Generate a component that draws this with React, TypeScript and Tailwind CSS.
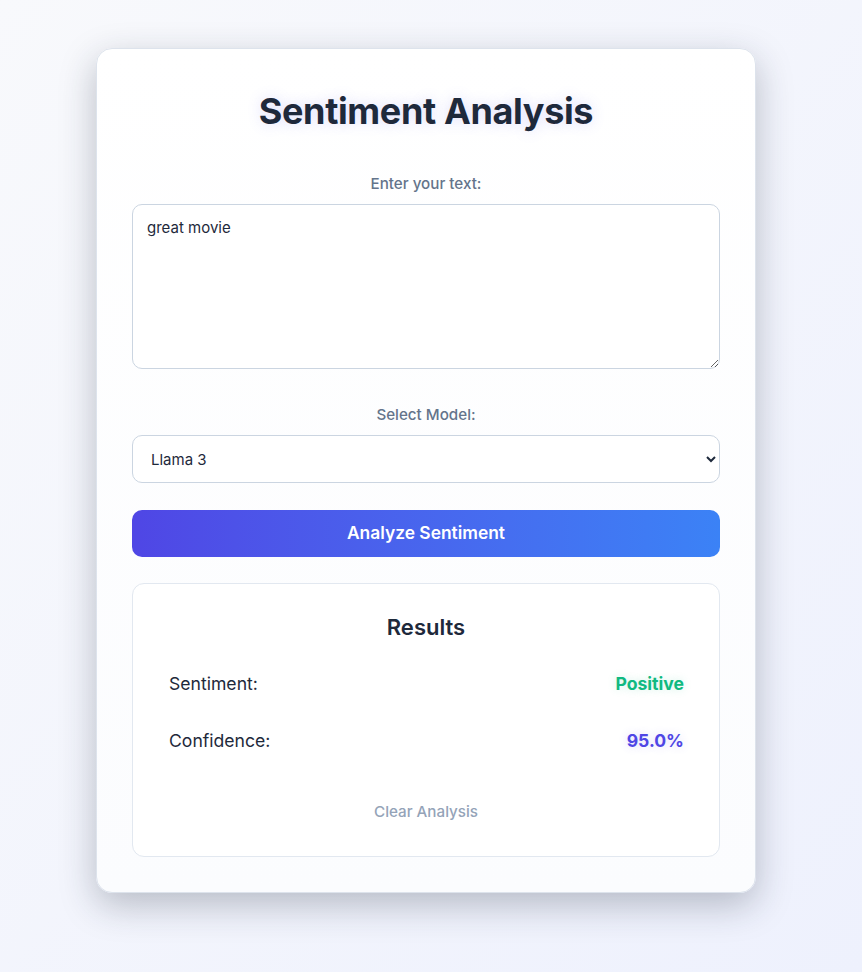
import { useState } from "react";

export default function App() {
  const [text, setText] = useState("great movie");
  const [model, setModel] = useState("llama3");

  return (
    <div className="min-h-screen bg-linear-to-br from-[#f8f9fc] to-[#eef1fd] font-['Inter',sans-serif]">
      <div className="flex justify-center pt-12 pb-20 pr-2.5">
        {/* Main Card */}
        <div className="w-[660px] rounded-2xl border border-[#dde3ec] bg-linear-to-b from-white to-[#fbfcfe] px-[35px] pt-[42px] pb-[35px] shadow-[0_12px_36px_rgba(30,41,59,0.28)]">
          <h1 className="text-center text-[36px] leading-10 font-bold tracking-[-0.01em] text-[#1e293b] [text-shadow:0_0_14px_rgba(99,102,241,0.22)]">
            Sentiment Analysis
          </h1>

          {/* Text Input */}
          <label className="mt-[42px] mb-[9px] block text-center text-[15.2px] leading-[22px] font-medium text-[#64748b]">
            Enter your text:
          </label>
          <textarea
            value={text}
            onChange={(e) => setText(e.target.value)}
            className="block h-[165px] w-full rounded-[10px] border border-[#cbd5e1] bg-white px-3.5 py-3 text-[15px] leading-[22px] text-[#1e293b] outline-none"
          />

          {/* Model Select */}
          <label className="mt-[35px] mb-[9px] block text-center text-[15.2px] leading-[22px] font-medium text-[#64748b]">
            Select Model:
          </label>
          <select
            value={model}
            onChange={(e) => setModel(e.target.value)}
            className="block h-12 w-full rounded-[10px] border border-[#cbd5e1] bg-white pr-3 pl-3.5 text-[15px] text-[#1e293b] outline-none"
          >
            <option value="llama3">Llama 3</option>
            <option value="gpt4">GPT-4</option>
            <option value="bert">BERT</option>
          </select>

          {/* Analyze Button */}
          <button className="mt-[27px] h-[47px] w-full rounded-[10px] bg-linear-to-r from-[#4f46e5] to-[#3b82f6] text-[17.4px] font-semibold text-white">
            Analyze Sentiment
          </button>

          {/* Results */}
          <div className="mt-[26px] rounded-xl border border-[#e2e8f0] bg-white px-7 pt-7 pb-[33px]">
            <h2 className="text-center text-[22px] leading-[30px] font-semibold text-[#1e293b]">
              Results
            </h2>
            <div className="mt-[13px] flex flex-col">
              <div className="flex items-center justify-between py-4 pr-[7px] pl-2 text-[17.6px] leading-[25px]">
                <span className="text-[#1e293b]">Sentiment:</span>
                <span className="font-bold text-[#10b981] [text-shadow:0_0_10px_rgba(16,185,129,0.2)]">
                  Positive
                </span>
              </div>
              <div className="flex items-center justify-between py-4 pr-[7px] pl-2 text-[17.6px] leading-[25px]">
                <span className="text-[#1e293b]">Confidence:</span>
                <span className="font-bold text-[#4f46e5] [text-shadow:0_0_10px_rgba(79,70,229,0.2)]">
                  95.0%
                </span>
              </div>
            </div>
            <button className="mx-auto mt-8 block text-[15.2px] leading-[22px] font-medium text-[#94a3b8]">
              Clear Analysis
            </button>
          </div>
        </div>
      </div>
    </div>
  );
}
